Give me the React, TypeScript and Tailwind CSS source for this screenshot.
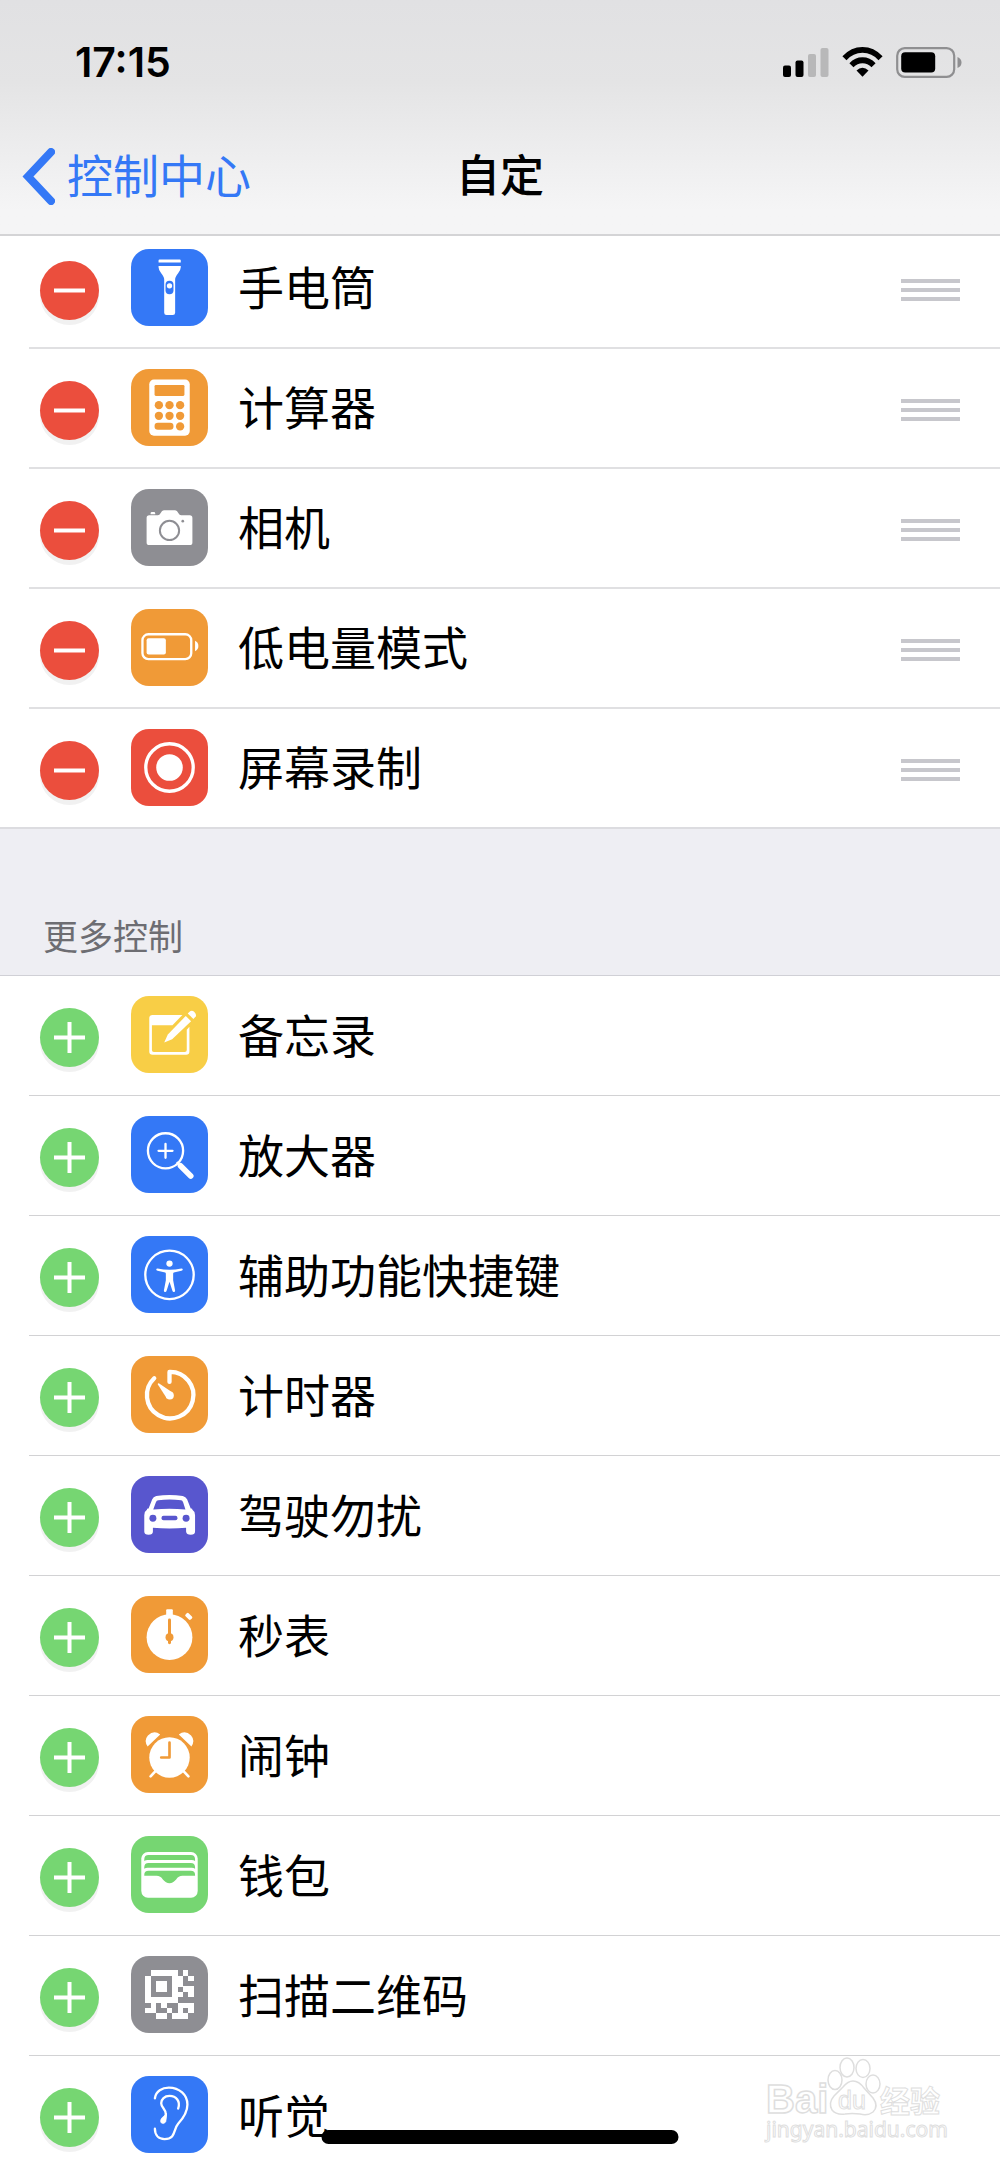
import { useState } from 'react'
import type { ReactNode } from 'react'

interface Control {
  name: string
  color: string
  icon: ReactNode
}

interface ControlRowProps {
  control: Control
  included: boolean
  onToggle: () => void
}

const QR_ROWS = [
  '.#####.#.',
  '#....##.#',
  '#.##.##..',
  '#.##.#.##',
  '#....##.#',
  '######...',
  '.#.#..###',
  '##..#.#.#',
  '..##.###.',
]

const FlashlightIcon = (
  <>
    <path fill="#fff" d="M83 35q0-3 3-3h61q3 0 3 3v6H83zM83 51h67v4q0 8-8 18-9 12-9 18v101q0 7-7 7h-19q-7 0-7-7V91q0-6-9-18-8-10-8-18z" />
    <rect x="104" y="96" width="24" height="40" rx="12" fill="#3478f6" />
    <circle cx="116" cy="111" r="8" fill="#fff" />
  </>
)

const CalculatorIcon = (
  <>
    <rect x="55" y="32" width="122" height="169" rx="14" fill="#fff" />
    <g fill="#f09a37">
      <rect x="71" y="48" width="90" height="33" rx="4" />
      <circle cx="84" cy="109" r="12.5" />
      <circle cx="116" cy="109" r="12.5" />
      <circle cx="148" cy="109" r="12.5" />
      <circle cx="84" cy="141" r="12.5" />
      <circle cx="116" cy="141" r="12.5" />
      <circle cx="148" cy="141" r="12.5" />
      <rect x="71" y="162" width="57" height="21" rx="10" />
      <circle cx="148" cy="173" r="12.5" />
    </g>
  </>
)

const CameraIcon = (
  <>
    <path fill="#fff" d="M59 73q0-4 4-4h6q4 0 4 4v3H59zM55 79h26q5 0 8-6 4-9 10-9h34q6 0 10 9 3 6 8 6h26q8 0 8 8v74q0 8-8 8H55q-8 0-8-8V87q0-8 8-8z" />
    <circle cx="116" cy="125" r="29" fill="none" stroke="#8e8e93" strokeWidth="6" />
    <circle cx="156" cy="97" r="4" fill="#8e8e93" />
  </>
)

const LowPowerIcon = (
  <>
    <rect x="34.500" y="76" width="147" height="75" rx="18" fill="none" stroke="#fff" strokeWidth="7" />
    <rect x="47" y="88" width="58" height="49" rx="6" fill="#fff" />
    <path fill="#fff" d="M193 96q10 5 10 15.500t-10 15.500z" />
  </>
)

const RecordIcon = (
  <>
    <circle cx="116" cy="116" r="71.500" fill="none" stroke="#fff" strokeWidth="10" />
    <circle cx="116" cy="116" r="40" fill="#fff" />
  </>
)

const NotesIcon = (
  <g fill="#fff">
    <path d="M155 57H65q-10 0-10 10v100q0 10 10 10h101q10 0 10-10V93l-8 9v61q0 6-6 6H69q-6 0-6-6V88h62z" />
    <path d="M100 140l11-24 54-56 16 16-57 54z" />
    <path d="M171 53l7-7q6-4 13 2 7 7 4 14l-7 7z" />
  </g>
)

const MagnifierIcon = (
  <g fill="none" stroke="#fff" strokeWidth="7" strokeLinecap="round">
    <circle cx="104" cy="105" r="53" />
    <path d="M83 105h42M104 84v42" />
    <path d="M142 143l-2-2" />
    <path d="M149 150l31 31" strokeWidth="17" />
  </g>
)

const AccessibilityIcon = (
  <>
    <circle cx="116" cy="117" r="73" fill="none" stroke="#fff" strokeWidth="7" />
    <circle cx="116" cy="83" r="9.500" fill="#fff" />
    <path fill="#fff" d="M80 97q18 4 36 4t36-4q4 0 4 4 0 2-4 3l-23 5q-2 1-2 4v19l6 32q0 4-4 4-3 0-4-3l-9-28-9 28q-1 3-4 3-4 0-4-4l6-32v-19q0-3-2-4l-23-5q-4-1-4-3 0-4 4-4z" transform="translate(0 1)" />
  </>
)

const TimerIcon = (
  <>
    <path d="M70 67A70 70 0 1 0 116 48V78" fill="none" stroke="#fff" strokeWidth="13" strokeLinecap="round" strokeLinejoin="round" />
    <path fill="#fff" d="M81 86q-1-5 4-3l40 27-17 18z" />
    <circle cx="117" cy="119" r="12" fill="#fff" />
  </>
)

const CarIcon = (
  <>
    <path fill="#fff" d="M76 60q40-6 80 0 9 2 13 10l11 28q5-1 5 4 8 5 8 16v49q0 10-13 10t-14-10v-11q-50 4-100 0v11q0 10-13 10t-13-10v-49q0-11 8-16 0-5 5-4l11-28q3-8 12-10z" />
    <g fill="#5856ce">
      <path d="M82 73q34-5 69 0 4 0 6 6l7 22q-48-5-97 0l8-22q2-6 7-6z" />
      <circle cx="66" cy="127" r="10.500" />
      <circle cx="166" cy="127" r="10.500" />
      <rect x="92" y="120" width="48" height="13" rx="6" />
    </g>
  </>
)

const StopwatchIcon = (
  <>
    <circle cx="116" cy="124" r="69" fill="#fff" />
    <rect x="106" y="40" width="20" height="22" rx="3" fill="#fff" />
    <rect x="163" y="55" width="22" height="13" rx="4" fill="#fff" transform="rotate(45 174 61.500)" />
    <path d="M116 72v69" stroke="#f09a37" strokeWidth="9" strokeLinecap="round" />
    <circle cx="116" cy="124" r="12" fill="#f09a37" />
  </>
)

const AlarmIcon = (
  <>
    <g fill="#fff">
      <circle cx="116" cy="125" r="61" />
      <path d="M50 92q-12-18 1-33 18-18 37-3zM182 92q12-18-1-33-18-18-37-3z" />
    </g>
    <path d="M76 164l-17 18M156 164l17 18" stroke="#fff" strokeWidth="8" strokeLinecap="round" />
    <path d="M116 80v45H91" fill="none" stroke="#f09a37" strokeWidth="8" strokeLinecap="round" strokeLinejoin="round" />
  </>
)

const WalletIcon = (
  <>
    <rect x="31" y="48" width="170" height="138" rx="20" fill="#fff" />
    <g fill="#76d672">
      <path d="M40 75v-5q0-13 13-13h127q13 0 13 13v5q-4-3-10-3H50q-6 0-10 3z" />
      <path d="M40 99v-5q0-13 13-13h127q13 0 13 13v5q-4-3-10-3H50q-6 0-10 3z" />
      <path d="M40 120v-3q0-12 13-12h127q13 0 13 12v3h-38q-12 0-19 11-9 11-20 11t-20-11q-7-11-19-11z" />
    </g>
  </>
)

const QrIcon = (
  <g fill="#fff" shapeRendering="crispEdges">
    {QR_ROWS.map((row, y) =>
      row.split('').map((cell, x) =>
        cell === '#' ? <rect key={`${x}-${y}`} x={43 + x * 16.2} y={43 + y * 16.2} width="16.500" height="16.500" /> : null
      )
    )}
  </g>
)

const EarIcon = (
  <g fill="none" stroke="#fff" strokeWidth="7" strokeLinecap="round">
    <path d="M72 67C75 46 94 35 114 35c32 0 56 22 56 51 0 26-15 44-28 58-15 17-6 46-41 46-18 0-29-12-29-31" />
    <path d="M142 98c8-22-6-38-26-38-15 0-25 10-25 22 0 14 15 17 14 34l-3 18" />
    <path d="M100 120q-14 10-10 20 9 8 15-3l2-24z" fill="#fff" strokeWidth="2" />
  </g>
)

const INCLUDED: Control[] = [
  { name: '手电筒', color: 'bg-[#3478f6]', icon: FlashlightIcon },
  { name: '计算器', color: 'bg-[#f09a37]', icon: CalculatorIcon },
  { name: '相机', color: 'bg-[#8e8e93]', icon: CameraIcon },
  { name: '低电量模式', color: 'bg-[#f09a37]', icon: LowPowerIcon },
  { name: '屏幕录制', color: 'bg-[#eb4e3d]', icon: RecordIcon },
]

const MORE: Control[] = [
  { name: '备忘录', color: 'bg-[#f8ce46]', icon: NotesIcon },
  { name: '放大器', color: 'bg-[#3478f6]', icon: MagnifierIcon },
  { name: '辅助功能快捷键', color: 'bg-[#3478f6]', icon: AccessibilityIcon },
  { name: '计时器', color: 'bg-[#f09a37]', icon: TimerIcon },
  { name: '驾驶勿扰', color: 'bg-[#5856ce]', icon: CarIcon },
  { name: '秒表', color: 'bg-[#f09a37]', icon: StopwatchIcon },
  { name: '闹钟', color: 'bg-[#f09a37]', icon: AlarmIcon },
  { name: '钱包', color: 'bg-[#76d672]', icon: WalletIcon },
  { name: '扫描二维码', color: 'bg-[#8e8e93]', icon: QrIcon },
  { name: '听觉', color: 'bg-[#3478f6]', icon: EarIcon },
]

const StatusBar = () => (
  <div className="flex h-[124px] items-center justify-between pr-[38px] pl-[75px]">
    <time className="font-['Inter',sans-serif] text-[41px] leading-none font-semibold">17:15</time>
    <div className="flex items-center gap-[13px]">
      <svg width="46" height="30" viewBox="0 0 46 30" aria-hidden="true">
        <rect x="0" y="18.500" width="8" height="11.500" rx="2" />
        <rect x="12.500" y="13.500" width="8" height="16.500" rx="2" />
        <rect x="25" y="7" width="8" height="23" rx="2" fill="#b8b8b9" />
        <rect x="37.500" y="1" width="8" height="29" rx="2" fill="#b8b8b9" />
      </svg>
      <svg width="41" height="30" viewBox="0 0 41 30" aria-hidden="true">
        <path d="M.4 9.300Q9 0 20.500 0t20.100 9.300L36.500 13.200Q30 5.700 20.500 5.700T4.500 13.200z" />
        <path d="M7.400 16.200Q13 10.300 20.500 10.300t13.100 5.900l-4.100 4.100q-3.800-4-9-4t-9 4z" />
        <path d="M14.500 23.500q2.800-2.800 6-2.800t6 2.800l-6 6.200z" />
      </svg>
      <svg width="66" height="31" viewBox="0 0 66 31" aria-hidden="true">
        <rect x="1.200" y="1.200" width="57" height="28.600" rx="7.500" fill="none" stroke="#8f8f91" strokeWidth="2.200" />
        <rect x="5.200" y="5.300" width="34" height="20.200" rx="4" />
        <path d="M61.500 10q4 1.500 4 5.500t-4 5.500z" fill="#8f8f91" />
      </svg>
    </div>
  </div>
)

const ControlRow = ({ control, included, onToggle }: ControlRowProps) => (
  <li className={`ml-[29px] box-content flex items-center pl-[11px] ${included ? 'h-[118px]' : 'h-[119px]'}`}>
    <button
      type="button"
      aria-label={`${included ? '移除' : '添加'}${control.name}`}
      onClick={onToggle}
      className={`mt-1 mr-8 flex size-[59px] shrink-0 items-center justify-center rounded-full shadow-[0_5px_0_0_#f1f1f1] ${included ? 'bg-[#eb4e3d]' : 'bg-[#76d672]'}`}
    >
      <svg width="31" height="31" viewBox="0 0 31 31" stroke="#fff" strokeWidth="4" aria-hidden="true">
        <path d={included ? 'M0 15.500H31' : 'M0 15.500H31M15.500 0V31'} />
      </svg>
    </button>
    <span className={`mr-[30px] mb-0.5 size-[77px] shrink-0 rounded-[18px] ${control.color}`}>
      <svg className="size-full" viewBox="0 0 232 232" aria-hidden="true">
        {control.icon}
      </svg>
    </span>
    <span className="flex-1 pb-1.5 text-[46px] leading-[60px]">{control.name}</span>
    {included && (
      <button type="button" aria-label={`移动${control.name}`} className="mt-1 mr-10 flex w-[59px] flex-col gap-[5px]">
        <span className="h-1 w-full bg-[#c7c7cc]" />
        <span className="h-1 w-full bg-[#c7c7cc]" />
        <span className="h-1 w-full bg-[#c7c7cc]" />
      </button>
    )}
  </li>
)

const Watermark = () => (
  <svg
    className="pointer-events-none absolute right-[52px] bottom-[17px]"
    width="184"
    height="92"
    viewBox="0 0 184 92"
    fill="#fff"
    stroke="#dedede"
    strokeWidth="1.500"
    aria-hidden="true"
  >
    <text x="2" y="57" fontFamily="Liberation Sans, sans-serif" fontSize="40" fontWeight="700">Bai</text>
    <ellipse cx="71" cy="24" rx="7" ry="9.500" />
    <ellipse cx="83" cy="11.500" rx="7" ry="9.500" />
    <ellipse cx="99" cy="12.500" rx="7" ry="9" />
    <ellipse cx="109" cy="28" rx="7" ry="9" />
    <path d="M89 25q6 0 11 7l9 10q6 8 0 14-5 4-13 2-8-1-15 0-9 1-13-4-4-7 2-14l9-9q5-6 10-6z" />
    <text x="74" y="53" fontFamily="Liberation Sans, sans-serif" fontSize="25" strokeWidth="1">du</text>
    <text x="116" y="56" fontFamily="Noto Sans CJK SC, sans-serif" fontSize="30" fontWeight="700" strokeWidth="1">经验</text>
    <text x="2" y="81" fontFamily="Noto Sans, sans-serif" fontSize="21" strokeWidth="1">jingyan.baidu.com</text>
  </svg>
)

export default function App() {
  const [included, setIncluded] = useState(INCLUDED)
  const [more, setMore] = useState(MORE)

  const remove = (control: Control) => {
    setIncluded(included.filter((item) => item.name !== control.name))
    setMore([control, ...more])
  }

  const add = (control: Control) => {
    setMore(more.filter((item) => item.name !== control.name))
    setIncluded([...included, control])
  }

  return (
    <div className="relative flex h-screen flex-col overflow-hidden bg-white font-['Noto_Sans_CJK_SC',sans-serif] text-black">
      <header className="relative z-10 shrink-0 border-b-2 border-[#d4d4d6] bg-linear-to-b from-[#e1e1e3] from-0% via-[#e4e4e5] via-35% to-[#f5f5f6] to-90%">
        <StatusBar />
        <nav className="grid h-[110px] grid-cols-[1fr_auto_1fr] items-center px-[22px] pb-1.5">
          <a href="#" className="flex items-center gap-3 text-[46px] leading-[60px] text-[#3478f6]">
            <svg width="33" height="57" viewBox="0 0 33 57" fill="none" stroke="currentColor" strokeWidth="8" strokeLinecap="round" strokeLinejoin="miter" aria-hidden="true">
              <path d="M29 4L6 28.500L29 53" />
            </svg>
            <span className="pb-1.5">控制中心</span>
          </a>
          <h1 className="pb-1.5 text-[44px] leading-[60px] font-medium">自定</h1>
        </nav>
      </header>

      <main className="min-h-0 flex-1 overflow-hidden">
        <ul className="-mt-[7px] divide-y-2 divide-[#e0e0e2] border-b-2 border-[#dcdce0]">
          {included.map((control) => (
            <ControlRow key={control.name} control={control} included onToggle={() => remove(control)} />
          ))}
        </ul>
        <h2 className="flex h-[147px] items-end border-b border-[#d0d0d6] bg-[#eeeef3] pb-4 pl-[43px] text-[35px] leading-[48px] text-[#6d6d72]">
          更多控制
        </h2>
        <ul className="divide-y divide-[#d2d2d4]">
          {more.map((control) => (
            <ControlRow key={control.name} control={control} included={false} onToggle={() => add(control)} />
          ))}
        </ul>
      </main>

      <Watermark />
      <div className="absolute bottom-[21px] left-1/2 h-[14px] w-[357px] -translate-x-1/2 rounded-full bg-black" />
    </div>
  )
}
